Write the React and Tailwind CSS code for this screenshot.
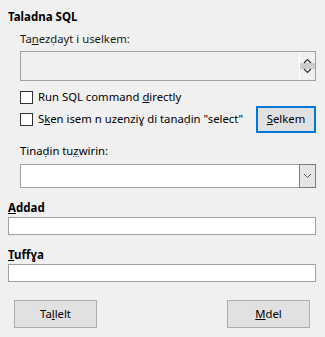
import React from "react";

function Check() {
  return <div className="w-[13px] h-[13px] border border-[#333333] bg-white shrink-0" />;
}

export default function App() {
  return (
    <div
      className="w-[325px] h-[337px] bg-[#f0f0f0] text-[11.3px] text-black relative overflow-hidden"
      style={{ fontFamily: '"Noto Sans", "Open Sans", sans-serif' }}
    >
      <div className="px-2 pt-[9px]">
        <div className="font-bold leading-[16px] h-[16px] text-[11.5px]">Taladna SQL</div>
        <div className="pl-3 pr-[1px]">
          <div className="mt-[6px] leading-[16px] h-[16px] text-[#1a1a1a]">
            Ta<u>n</u>ezḍayt i uselkem:
          </div>
          <div className="mt-[4px] h-[30px] border border-[#a0a0a0] bg-[#f0f0f0] flex justify-end">
            <div className="w-[16px] border-l border-white flex flex-col items-center justify-center relative">
              <div className="absolute left-0 right-0 top-[11px] h-[6px] bg-[#cdcdcd]" />
              <svg width="9" height="18" viewBox="0 0 9 18" className="relative">
                <path d="M1 6 L4.5 2.5 L8 6" stroke="#333" strokeWidth="1.2" fill="none" />
                <path d="M1 12 L4.5 15.5 L8 12" stroke="#333" strokeWidth="1.2" fill="none" />
              </svg>
            </div>
          </div>
          <div className="mt-[9px] flex items-center gap-[5px] h-[14px]">
            <Check />
            <span className="leading-[16px]">
              Run SQL command <u>d</u>irectly
            </span>
          </div>
          <div className="mt-[1px] flex items-center justify-between h-[28px]">
            <div className="flex items-center gap-[5px]">
              <Check />
              <span className="leading-[16px]">
                S<u>k</u>en isem n uzenziɣ di tanaḍin "select"
              </span>
            </div>
            <div className="w-[60px] h-[27px] border-2 border-[#0078d7] bg-[#e1e1e1] flex items-center justify-center">
              <span>
                <u>S</u>elkem
              </span>
            </div>
          </div>
          <div className="mt-[10px] leading-[16px] h-[16px]">
            Tinaḍin tu<u>ẓ</u>wirin:
          </div>
          <div className="mt-[5px] h-[24px] border border-[#a0a0a0] bg-white flex justify-end">
            <div className="w-[17px] border border-[#7a7a7a] bg-[#e5e5e5] flex items-center justify-center -mt-[1px] -mr-[1px] h-[24px]">
              <svg width="9" height="6" viewBox="0 0 9 6">
                <path d="M1 1 L4.5 4.5 L8 1" stroke="#555" strokeWidth="1" fill="none" />
              </svg>
            </div>
          </div>
        </div>
        <div className="mt-[12px] font-bold leading-[16px] h-[16px] text-[11.5px]">
          <u>A</u>ddad
        </div>
        <div className="mt-[1px] h-[18px] border border-[#a0a0a0] bg-white mr-[1px]" />
        <div className="mt-[12px] font-bold leading-[16px] h-[16px] text-[11.5px]">
          <u>T</u>uffɣa
        </div>
        <div className="mt-[1px] h-[18px] border border-[#a0a0a0] bg-white mr-[1px]" />
        <div className="mt-[18px] flex justify-between pl-[6px] pr-[7px]">
          <div className="w-[83px] h-[28px] border border-[#adadad] bg-[#e1e1e1] flex items-center justify-center">
            <span>
              Ta<u>l</u>lelt
            </span>
          </div>
          <div className="w-[83px] h-[28px] border border-[#adadad] bg-[#e1e1e1] flex items-center justify-center">
            <span>
              <u>M</u>del
            </span>
          </div>
        </div>
      </div>
    </div>
  );
}
